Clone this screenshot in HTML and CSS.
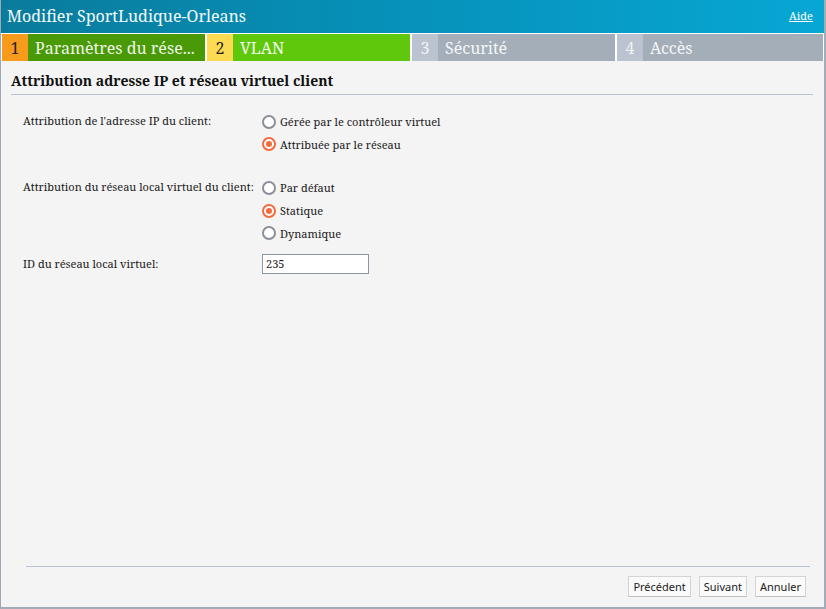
FILE: index.html
```html
<!DOCTYPE html>
<html lang="fr">
<head>
<meta charset="utf-8">
<title>Modifier SportLudique-Orleans</title>
<link rel="stylesheet" href="styles.css">
</head>
<body>
<div class="window">
  <header class="titlebar">
    <h1 class="title">Modifier SportLudique-Orleans</h1>
    <a class="help" href="#">Aide</a>
  </header>
  <nav class="steps">
    <div class="step step-done"><span class="num">1</span><span class="label">Paramètres du rése...</span></div>
    <div class="step step-current"><span class="num">2</span><span class="label">VLAN</span></div>
    <div class="step step-todo"><span class="num">3</span><span class="label">Sécurité</span></div>
    <div class="step step-todo step-last"><span class="num">4</span><span class="label">Accès</span></div>
  </nav>
  <main class="content">
    <h2 class="section-title">Attribution adresse IP et réseau virtuel client</h2>
    <div class="form">
      <div class="field">
        <div class="field-label">Attribution de l'adresse IP du client:</div>
        <div class="options">
          <label class="option"><span class="radio"></span>Gérée par le contrôleur virtuel</label>
          <label class="option"><span class="radio checked"></span>Attribuée par le réseau</label>
        </div>
      </div>
      <div class="field field-gap">
        <div class="field-label">Attribution du réseau local virtuel du client:</div>
        <div class="options">
          <label class="option"><span class="radio"></span>Par défaut</label>
          <label class="option"><span class="radio checked"></span>Statique</label>
          <label class="option"><span class="radio"></span>Dynamique</label>
        </div>
      </div>
      <div class="field field-input">
        <div class="field-label">ID du réseau local virtuel:</div>
        <div class="options"><div class="textbox">235</div></div>
      </div>
    </div>
  </main>
  <footer class="footer">
    <div class="buttons">
      <button class="btn">Précédent</button>
      <button class="btn">Suivant</button>
      <button class="btn">Annuler</button>
    </div>
  </footer>
</div>
</body>
</html>
```

FILE: styles.css
```css
html, body {
  margin: 0;
  padding: 0;
  background: #f4f4f4;
}
body {
  font-family: "Noto Serif", "DejaVu Serif", "Liberation Serif", serif;
  color: #1a1a1a;
}
.window {
  box-sizing: border-box;
  width: 826px;
  height: 609px;
  display: flex;
  flex-direction: column;
  background: #f4f4f4;
  border-left: 1px solid #9ea8b4;
  border-right: 2px solid #a4acb8;
  border-bottom: 2px solid #a4acb8;
}
.titlebar {
  height: 33px;
  flex: none;
  display: flex;
  align-items: center;
  justify-content: space-between;
  padding: 0 11px 0 6px;
  background: linear-gradient(to right, #0a7b9c, #0690b8 45%, #07a7d4);
}
.title {
  margin: 0;
  font-size: 16px;
  font-weight: normal;
  color: #f4fbfd;
  padding-bottom: 1px;
}
.help {
  font-size: 11px;
  color: #ffffff;
  text-decoration: underline;
  margin-bottom: 3px;
}
.steps {
  flex: none;
  display: flex;
  gap: 2px;
  height: 27px;
  padding: 1px 1px 0 1px;
  background: #ffffff;
}
.step {
  width: 203px;
  display: flex;
  font-size: 16px;
  line-height: 26px;
}
.step-last {
  flex: 1;
}
.num {
  width: 26px;
  flex: none;
  text-align: center;
  padding-top: 1px;
}
.label {
  flex: 1;
  padding-left: 7px;
  padding-top: 1px;
  white-space: nowrap;
  overflow: hidden;
}
.step-done .num { background: #f89b1d; color: #222; }
.step-done .label { background: #4a9a08; color: #eef6e6; }
.step-current .num { background: #fcdb52; color: #222; }
.step-current .label { background: #5fc70c; color: #f4fbef; }
.step-todo .num { background: #bac3cf; color: #f2f4f6; }
.step-todo .label { background: #a4aeb9; color: #f4f6f8; }
.content {
  flex: 1;
  padding: 0 11px 0 10px;
}
.section-title {
  margin: 10px 0 0 0;
  font-size: 14px;
  font-weight: bold;
  line-height: 19px;
  padding-bottom: 4px;
  border-bottom: 1px solid #b8c4d6;
  color: #111;
}
.form {
  padding: 15px 0 0 12px;
  font-size: 11px;
}
.field {
  display: grid;
  grid-template-columns: 239px 1fr;
}
.field-gap {
  margin-top: 21px;
}
.field-input {
  margin-top: 9px;
  align-items: center;
}
.field-label {
  line-height: 22px;
}
.options {
  display: flex;
  flex-direction: column;
}
.option {
  display: flex;
  align-items: center;
  height: 23px;
  gap: 4px;
}
.option:last-child {
  height: 22px;
}
.radio {
  box-sizing: border-box;
  width: 14px;
  height: 14px;
  border-radius: 50%;
  border: 2px solid #8a8f98;
  background: #ffffff;
  position: relative;
}
.radio.checked {
  border-color: #f26a3d;
}
.radio.checked::after {
  content: "";
  position: absolute;
  left: 2px;
  top: 2px;
  width: 6px;
  height: 6px;
  border-radius: 50%;
  background: #f26a3d;
}
.textbox {
  box-sizing: border-box;
  width: 107px;
  height: 20px;
  border: 1px solid #8e98a4;
  background: #ffffff;
  padding: 2px 3px;
  font-size: 11px;
  line-height: 14px;
}
.footer {
  flex: none;
  margin: 0 14px 0 25px;
  border-top: 1px solid #b8c4d6;
}
.buttons {
  display: flex;
  justify-content: flex-end;
  gap: 8px;
  padding: 9px 4px 10px 0;
}
.btn {
  font-family: "Noto Sans", "Open Sans", "DejaVu Sans", sans-serif;
  font-size: 11px;
  height: 21px;
  padding: 0 4px;
  background: #fafafa;
  border: 1px solid #d4d4d4;
  border-bottom-color: #c0c0c0;
  color: #222;
  line-height: 19px;
}
```
